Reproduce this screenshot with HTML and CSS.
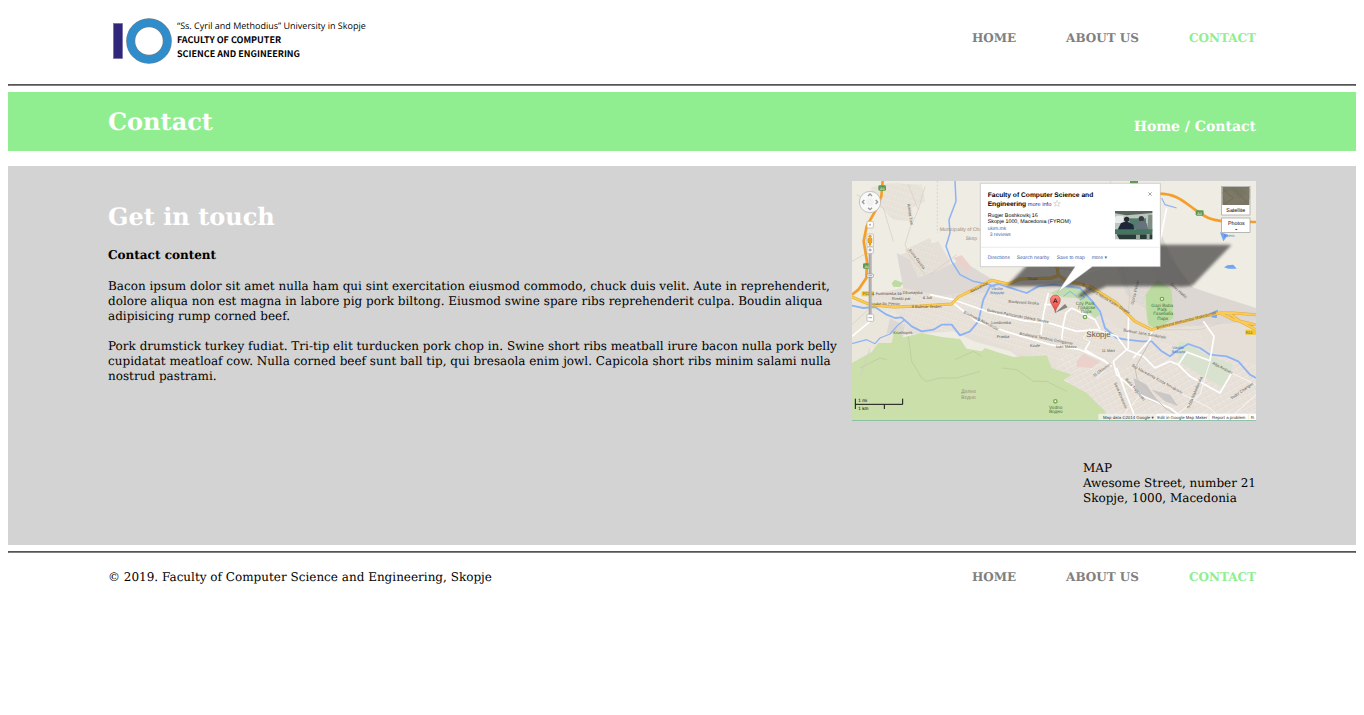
FILE: index.html
```
<!DOCTYPE html>
<html lang="en">
<head>
<meta charset="utf-8">
<title>Contact</title>
<link rel="stylesheet" href="styles.css">
</head>
<body>
<header class="bar header">
  <a class="logo" href="#" aria-label="Faculty of Computer Science and Engineering">
    <svg class="logo-mark" viewBox="0 0 64 50" aria-hidden="true">
      <rect x="5.500" y="7.500" width="9" height="35" fill="#30267a" stroke="#6c659f" stroke-width=".6"/>
      <circle cx="41" cy="25" r="18.300" fill="none" stroke="#71808c" stroke-width="9"/>
      <circle cx="41" cy="25" r="18.300" fill="none" stroke="#2f8dcc" stroke-width="7.800"/>
    </svg>
    <span class="logo-text">
      <span class="logo-small">“Ss. Cyril and Methodius” University in Skopje</span>
      <span class="logo-bold">FACULTY OF COMPUTER</span>
      <span class="logo-bold">SCIENCE AND ENGINEERING</span>
    </span>
  </a>
  <nav class="nav"><a href="#">HOME</a><a href="#">ABOUT US</a><a class="active" href="#">CONTACT</a></nav>
</header>
<hr class="rule">
<section class="bar banner">
  <h1 class="title">Contact</h1>
  <p class="crumbs">Home / Contact</p>
</section>
<main class="bar main">
  <article class="copy">
    <h2 class="title">Get in touch</h2>
    <h3 class="subtitle">Contact content</h3>
    <p>Bacon ipsum dolor sit amet nulla ham qui sint exercitation eiusmod commodo, chuck duis velit. Aute in reprehenderit, dolore aliqua non est magna in labore pig pork biltong. Eiusmod swine spare ribs reprehenderit culpa. Boudin aliqua adipisicing rump corned beef.</p>
    <p>Pork drumstick turkey fudiat. Tri-tip elit turducken pork chop in. Swine short ribs meatball irure bacon nulla pork belly cupidatat meatloaf cow. Nulla corned beef sunt ball tip, qui bresaola enim jowl. Capicola short ribs minim salami nulla nostrud pastrami.</p>
  </article>
  <aside class="place">
    <svg class="map" viewBox="6 9 1212 720" role="img" aria-label="Map of Skopje">
      <defs>
        <pattern id="streets" width="19" height="17" patternUnits="userSpaceOnUse" patternTransform="rotate(17)">
          <path d="M0 4H19M6 0V17M14 4V17M0 12H14" fill="none" stroke="#f5f1e9" stroke-width="1.600"/>
          <path d="M0 5.500H19M7.500 0V17" fill="none" stroke="#d2cac1" stroke-width=".8"/>
        </pattern>
        <pattern id="streets2" width="16" height="17" patternUnits="userSpaceOnUse" patternTransform="rotate(-28)">
          <path d="M0 4H16M6 0V17M0 12H16" fill="none" stroke="#f6f2ec" stroke-width="1.600"/>
          <path d="M0 5.500H16M7.500 0V17" fill="none" stroke="#cfc7be" stroke-width=".8"/>
        </pattern>
        <filter id="soft" x="-10%" y="-20%" width="120%" height="140%"><feGaussianBlur stdDeviation="4"/></filter>
        <linearGradient id="pin" x1="0" y1="0" x2="0" y2="1"><stop offset="0" stop-color="#ff8a80"/><stop offset="1" stop-color="#e0443c"/></linearGradient>
      </defs>
      <rect x="6" y="9" width="1212" height="720" fill="#efece4"/>
      <!-- built-up areas -->
      <path d="M60 30L120 15 215 20 225 70 185 90 190 130 130 125 100 95Z" fill="#e7e1d8"/>
      <path d="M150 230L265 190 300 250 300 300 420 300 470 320 620 310 700 290 840 240 880 180 925 155 975 250 1010 320 1218 400V729H740L690 650 640 600 540 560 480 520 370 490 310 460 160 470 90 440 60 390 60 350 160 330Z" fill="#e6dfd7"/>
      <path d="M140 225L250 285 330 245 420 300 420 340 310 360 160 330Z" fill="#ddd8d3"/>
      <path d="M165 215L240 180 275 270 205 300Z" fill="#e3ddd4"/>
      <path d="M790 240L885 170 930 155 960 240 1030 330 1218 390V430L960 450 830 350Z" fill="#dcd7d2"/>
      <path d="M6 370H120L170 455 90 550 6 600Z" fill="#ebe6dc"/>
      <path d="M120 420L165 440 160 475 110 465Z" fill="#dcd7d2"/>
      <path d="M60 30L120 15 215 20 225 70 185 90 190 130 130 125 100 95ZM165 215L240 180 275 270 205 300ZM60 350L300 350 480 320 640 330 840 470 760 600 500 520 370 470 310 460 160 450 90 400ZM20 560L60 510 130 500 100 580 30 610Z" fill="url(#streets)" opacity=".75"/>
      <path d="M640 520L820 570 900 490 1080 520 1218 560V729H750L690 650 610 590Z" fill="url(#streets2)" opacity=".9"/>
      <path d="M800 280L890 230 930 320 880 400ZM870 450L1040 440 1080 530 960 540Z" fill="url(#streets)" opacity=".6"/>
      <path d="M850 600L890 620 930 680 900 668 860 640ZM905 635L960 650 985 685 945 670Z" fill="#cbc7c4"/>
      <path d="M310 240L335 232 365 268 350 280ZM680 550L700 527 750 550 725 570 680 567Z" fill="#ead1cc"/>
      <!-- green areas -->
      <path d="M6 555L65 522 85 495 125 495 135 450 160 478 215 465 275 477 330 483 350 512 395 520 405 510 450 525 490 537 520 535 555 535 590 532 605 570 665 590 640 607 710 645 765 700 775 729H6Z" fill="#cadfaa"/>
      <path d="M125 315L135 305 160 315 150 327 130 326ZM890 410L887 350 905 325 925 307 965 335 970 420 920 455 895 440Z" fill="#bcdba0"/>
      <path d="M600 345L650 323 690 330 730 370 750 410 735 420 700 390 685 360 640 358Z" fill="#c2deb0"/>
      <path d="M985 490L1020 495 1060 525 1150 560 1120 630 1050 590 985 550Z" fill="#d9e2cf"/>
      <path d="M175 475L185 550 215 600 230 610 270 600 320 600 390 580M455 570L500 575 550 610 590 610 650 640M315 545L370 520 395 535M30 570L90 540 110 545" fill="none" stroke="#b9c5a0" stroke-width="2"/>
      <!-- water -->
      <g fill="none" stroke="#8db3f4" stroke-linejoin="round">
        <path d="M315 9L318 70 297 125 300 165 288 205 305 250 330 290 370 310 410 318 435 325" stroke-width="4.500"/>
        <path d="M6 383L40 390 75 387 110 410 135 420 155 418 185 445 215 460 250 455 275 440 305 440 330 472 360 460 385 430 400 365 420 325 445 318 530 345 565 325 610 320 650 325 690 330 725 368 750 400 765 450 800 480 830 485 875 490 905 490 935 520 960 535 985 515 1015 498 1050 510 1080 530 1130 535 1165 550 1200 590 1218 600" stroke-width="5.500"/>
        <path d="M6 497L50 485 75 497 90 480 120 468 145 440 165 425M935 60L945 80 980 90" stroke-width="3.500"/>
      </g>
      <path d="M1110 163L1135 170 1120 190ZM1122 268L1132 262 1150 260 1160 272 1135 272ZM1080 405L1104 395 1100 420 1085 418Z" fill="#73a5f5"/>
      <path d="M640 355L660 340 680 355M690 350L705 358 690 366" fill="none" stroke="#83b9de" stroke-width="3"/>
      <!-- local roads -->
      <g fill="none" stroke="#d3cbc1" stroke-width="2">
        <path d="M175 20L205 95 180 150 165 200 180 235 225 290 M205 95L225 25M240 290L320 230M20 50L100 90 130 190M6 250L60 220M790 70L810 250 840 350 830 440M740 60L770 110M850 100L880 180M920 455H1050L1110 435M540 260L700 280 840 245M780 9L830 120M60 510L30 600M6 440L60 390"/>
      </g>
      <path d="M262 9V165" stroke="#cfc9c1" stroke-width="2" stroke-dasharray="6 5"/>
      <!-- white avenues -->
      <g fill="none" stroke="#fff" stroke-width="5" stroke-linejoin="round">
        <path d="M240 350L310 365 410 400 520 428 600 436 680 460 740 455 800 475M310 375L380 430 465 460 600 500 690 515 760 545 785 565M595 345L580 410 573 470M620 380L582 380M640 440L648 405 665 390 735 425 750 455M640 440L635 485M835 400V510L790 550M800 475L830 515 880 535 915 570 960 550 985 560 1020 595 1110 645 1145 585M985 560L1010 522 1080 548 1092 475 1060 430M905 460L900 485 850 540M790 550L800 590 870 650 960 690 1010 729M800 570L825 640 860 729M720 490L705 515 780 560M950 90L915 260M6 475L60 430"/>
      </g>
      <g fill="none" stroke="#f9f6f0" stroke-width="3">
        <path d="M850 560L980 640 1080 690 1120 729M1080 550L1050 650 960 729M1145 585L1218 620M1130 729L1218 650M790 550L740 600M835 690L810 729M720 450L700 480 720 490M870 650L840 690"/>
      </g>
      <path d="M900 490L855 570 862 605 945 690 1010 729" fill="none" stroke="#c7c0bb" stroke-width="3"/>
      <!-- yellow main roads -->
      <g fill="none" stroke-linejoin="round">
        <path d="M6 357L60 380 130 387 210 384 305 378 325 357 425 307 475 318 510 303 605 300 625 292 650 308 720 325 800 375 855 430 905 455 1060 415 1110 405 1150 405 1218 410M1110 405L1150 425 1218 440M1140 408L1170 430 1218 455M620 260L625 292" stroke="#dfad45" stroke-width="9"/>
        <path d="M6 357L60 380 130 387 210 384 305 378 325 357 425 307 475 318 510 303 605 300 625 292 650 308 720 325 800 375 855 430 905 455 1060 415 1110 405 1150 405 1218 410M1110 405L1150 425 1218 440M1140 408L1170 430 1218 455M620 260L625 292" stroke="#fbcb55" stroke-width="6"/>
        <path d="M98 9L94 55 78 95 50 145 41 190 51 250 49 300 25 335 6 350M925 47C980 47 1000 70 1035 95S1080 125 1120 130L1218 132" stroke="#f59f2a" stroke-width="8"/>
      </g>
      <g fill="#5d9950"><rect x="85" y="22" width="23" height="16" rx="4"/><rect x="39" y="256" width="23" height="16" rx="4"/><rect x="1037" y="97" width="24" height="16" rx="4"/><rect x="840" y="3" width="24" height="15" rx="4"/></g>
      <g class="map-shield"><text x="90" y="35">A3</text><text x="44" y="269">A3</text><text x="1042" y="110">A3</text></g>
      <path d="M35 340H72V355H35ZM1186 455H1218V470H1186Z" fill="#f5c82e"/>
      <g class="map-road">
        <text x="38" y="352">P2234</text><text x="1187" y="467">R11</text>
        <text x="77" y="352">Fushtanska bb</text><text x="158" y="348">Džumajska</text><text x="125" y="367">Rimski pat</text><text x="218" y="362">4 Juli</text>
        <text x="64" y="382">Ljube Ilic Petrov</text><text x="185" y="389">8 Bulevar Ilinden</text>
        <text transform="translate(362 345) rotate(-27)">Aleksandar</text><text x="532" y="306">Skupi</text>
        <text transform="translate(475 374) rotate(4)">Boulevard Ilinska</text>
        <text transform="translate(410 400) rotate(11)">Bulevard Partizanski Odredi Skopje</text>
        <text transform="translate(340 405) rotate(27)">Boulevard Aleksandar</text><text x="424" y="439">Londonska</text>
        <text x="440" y="481">Praska</text><text x="540" y="506">Kozle</text><text transform="translate(508 470) rotate(11)">Boulevard Teodosij Gologanov</text>
        <text x="618" y="511">Ivan Mazov</text><text transform="translate(695 323) rotate(31)">Boulevard Nikola Karev Skopje</text>
        <text transform="translate(920 453) rotate(-14)">Boulevard Aleksandar Makedonski</text>
        <text transform="translate(820 460) rotate(10)">Bulevar Jane Sandanski</text><text transform="translate(845 565) rotate(29)">Bul Macedonia Kosta Novakovic</text>
        <text transform="translate(825 605) rotate(49)">Boris Trajkovski</text><text transform="translate(792 615) rotate(67)">Sava Kovacevic</text><text transform="translate(1018 692) rotate(-67)">Srbija Makedonska</text><text transform="translate(1086 558) rotate(27)">Alija Avdovic</text>
        <text transform="translate(1145 665) rotate(-35)">Todor Changov</text><text transform="translate(175 215) rotate(53)">Juzna Gazela</text><text transform="translate(172 78) rotate(82)">Aminta Treti</text><text transform="translate(960 320) rotate(42)">Dimo Hadzi</text>
        <text transform="translate(732 597) rotate(-35)">11 Oktomvri</text><text transform="translate(850 380) rotate(-76)">Gjorce Petrov</text>
        <text x="755" y="523">11 Mart</text><text x="130" y="467">Krushopek</text>
      </g>
      <g class="map-area"><text x="269" y="160">Municipality of Cha</text><text x="347" y="186">Skop</text><text x="334" y="646">Долно</text><text x="334" y="662">Водно</text></g>
      <g class="map-park"><text x="677" y="381">City Park</text><text x="684" y="394">Градски</text><text x="693" y="406">Парк</text><text x="904" y="386">Gazi Baba</text><text x="922" y="399">Park</text><text x="910" y="412">Газибаба</text><text x="922" y="425">Парк</text><text x="597" y="692">Vodno</text><text x="597" y="706">Водно</text></g>
      <g class="map-water"><text x="424" y="336">Vardar</text><text x="421" y="348">Вардар</text><text x="967" y="512">Vardar</text><text x="965" y="524">Вардар</text><text x="1122" y="178">Ezero</text></g>
      <text class="map-city" x="709" y="478">Skopje</text>
      <g fill="#fff" stroke="#75a94f" stroke-width="4"><circle cx="705" cy="417" r="5"/><circle cx="936" cy="363" r="5"/><circle cx="616" cy="670" r="5"/></g>
      <!-- callout -->
      <path d="M470 325L590 200H1145L1028 322Q1010 328 970 325H770L695 358H680L715 325Z" fill="#252525" opacity=".62" filter="url(#soft)"/>
      <path d="M615 405L645 378 653 388Z" fill="#444" opacity=".6"/>
      <path d="M391 16H931V266H727L622 344 675 266H391Z" fill="#fff" stroke="#a7a7a7" stroke-width="1.500"/>
      <path d="M394 208H928" stroke="#e3e3e3" stroke-width="2"/>
      <g class="pop-title"><text x="413" y="56">Faculty of Computer Science and</text><text x="413" y="83">Engineering</text></g>
      <text class="pop-more" x="533" y="83">more info</text>
      <path d="M621 67L624 74H631L625 78 628 85 621 81 614 85 617 78 611 74H618Z" fill="none" stroke="#bbb" stroke-width="1.500"/>
      <g class="pop-text"><text x="413" y="116">Rugjer Boshkovikj 16</text><text x="413" y="136">Skopje 1000, Macedonia (FYROM)</text></g>
      <g class="pop-link"><text x="413" y="155">ukim.mk</text><text x="419" y="175">3 reviews</text><text x="413" y="242">Directions</text><text x="500" y="242">Search nearby</text><text x="620" y="242">Save to map</text><text x="725" y="242">more ▾</text></g>
      <path d="M895 43L905 53M905 43L895 53" stroke="#777" stroke-width="2"/>
      <g>
        <path d="M795 99H907V184H795Z" fill="#bcc6c0"/><path d="M795 99H907V105L830 112 795 106Z" fill="#59645b"/>
        <path d="M800 113H820V135H795V118Z" fill="#e5ece9"/><path d="M838 121H888V153H838Z" fill="#547c6c"/><path d="M895 110H907V160H892Z" fill="#7f8d83"/>
        <circle cx="830" cy="124" r="8" fill="#29282b"/><path d="M804 153L813 135 830 130 850 140 853 158H804Z" fill="#1e2638"/>
        <circle cx="874" cy="122" r="8" fill="#393b40"/><path d="M858 157L861 137 875 128 890 136 895 157Z" fill="#66727e"/>
        <path d="M795 154H907V168H795Z" fill="#437661"/><path d="M800 169H907V184H808Z" fill="#293b36"/><path d="M858 170H870V184H858ZM890 168H899V184H890Z" fill="#9aa69d"/>
      </g>
      <path d="M616 404C615 388 601 380 601 366A15 15 0 0 1 631 366C631 380 617 388 616 404Z" fill="url(#pin)" stroke="#a33a35" stroke-width="1.500"/>
      <text class="pin-letter" x="609" y="374">A</text>
      <!-- controls -->
      <circle cx="60" cy="72" r="32" fill="#f9f9f9" stroke="#aaa" stroke-width="2"/><circle cx="60" cy="72" r="11" fill="#f1f1f1"/>
      <path d="M54 54L60 48 66 54M54 89L60 95 66 89M43 66L37 72 43 78M77 66L83 72 77 78" fill="none" stroke="#999" stroke-width="4"/>
      <g fill="#fff" stroke="#aaa" stroke-width="2">
        <rect x="51" y="130" width="19" height="20" rx="3"/><rect x="57" y="225" width="7" height="188"/><rect x="51" y="168" width="19" height="38" rx="2"/><rect x="51" y="207" width="19" height="19" rx="2"/><rect x="51" y="409" width="20" height="21" rx="3"/>
      </g>
      <path d="M60 228V408" stroke="#666" stroke-width="3"/>
      <rect x="51" y="288" width="19" height="10" rx="2" fill="#fff" stroke="#888" stroke-width="2"/>
      <path d="M55 216H66M60 211V221M55 419H66M55 293H66" stroke="#777" stroke-width="2"/>
      <circle cx="60" cy="140" r="3" fill="#aaa"/><circle cx="60" cy="175" r="5" fill="#f0a020"/><path d="M54 181H66V194H63V202H57V194H54Z" fill="#f3a51c" stroke="#a66c0b"/>
      <rect x="1115" y="25" width="85" height="86" fill="#fff" stroke="#999" stroke-width="2"/><rect x="1117" y="27" width="81" height="54" fill="#777563"/>
      <path d="M1117 43L1145 38 1170 61 1198 39V63L1160 81H1130ZM1170 27L1198 31V52Z" fill="#7d7966"/><path d="M1120 35L1150 60 1125 78M1150 30L1190 72" fill="none" stroke="#6e6e5e" stroke-width="3"/>
      <rect x="1115" y="120" width="85" height="43" fill="#fff" stroke="#999" stroke-width="2"/>
      <g class="map-button"><text x="1129" y="101">Satellite</text><text x="1134" y="140">Photos</text></g><path d="M1154 153H1163L1159 157Z" fill="#444"/>
      <path d="M16 662V693M16 679H158V662M103 680V693" fill="none" stroke="#111" stroke-width="3"/>
      <g class="map-scale"><text x="25" y="671">1 mi</text><text x="25" y="695">1 km</text></g>
      <path d="M745 707H1218V727H745Z" fill="#f4f3ef" opacity=".8"/><path d="M919 707H1075V727H919ZM1080 707H1193V727H1080ZM1198 707H1218V727H1198Z" fill="#fff"/>
      <g class="map-credit"><text x="759" y="722">Map data ©2014 Google ▾</text><text x="922" y="722">Edit in Google Map Maker</text><text x="1086" y="722">Report a problem</text><text x="1202" y="722">R.</text></g>
      <path d="M6 728H1218" stroke="#80b9a3" stroke-width="3"/>
    </svg>
    <address class="address">MAP<br>Awesome Street, number 21<br>Skopje, 1000, Macedonia</address>
  </aside>
</main>
<hr class="rule">
<footer class="bar footer">
  <p class="copyright">© 2019. Faculty of Computer Science and Engineering, Skopje</p>
  <nav class="nav"><a href="#">HOME</a><a href="#">ABOUT US</a><a class="active" href="#">CONTACT</a></nav>
</footer>
</body>
</html>
```
FILE: styles.css
```
body {
  margin: 8px;
  background: #fff;
  color: #000;
  font-family: "DejaVu Serif", serif;
  font-size: 12px;
  line-height: 15px;
  text-rendering: geometricPrecision;
}

h1, h2, h3, p { margin: 0; }

.bar {
  display: flex;
  justify-content: space-between;
  padding: 0 100px;
}

.header { padding-bottom: 12px; }

.logo {
  display: flex;
  color: #000;
  text-decoration: none;
  padding-top: 8px;
}
.logo-mark { width: 64px; height: 50px; }
.logo-text {
  display: flex;
  flex-direction: column;
  padding: 3px 0 0 5px;
  line-height: 14px;
  font-size: 9px;
  white-space: nowrap;
}
.logo-small { font-family: "Open Sans", sans-serif; }
.logo-bold {
  font-family: "Noto Sans CJK SC", "Open Sans", sans-serif;
  font-weight: bold;
}

.nav {
  display: flex;
  gap: 50px;
  font-weight: bold;
}
.header .nav { padding-top: 23px; }
.nav a { color: gray; text-decoration: none; }
.nav .active { color: lightgreen; }

.rule {
  margin: 6px 0;
  border: 1px solid #555;
  border-bottom-color: gray;
}

.banner {
  background: lightgreen;
  color: #fff;
  padding-top: 16px;
  padding-bottom: 15px;
  margin-bottom: 15px;
}
.title {
  font-size: 24px;
  line-height: 28px;
  color: #fff;
}
.crumbs {
  font-size: 14px;
  font-weight: bold;
  line-height: 16px;
  padding-top: 11px;
}

.main {
  background: lightgray;
  padding-top: 15px;
  padding-bottom: 39px;
}
.copy { flex: 1; padding-top: 22px; }
.subtitle { font-size: 12px; margin-top: 17px; }
.copy p { margin-top: 15px; }
.subtitle + p { margin-top: 16px; }

.place {
  display: flex;
  flex-direction: column;
  align-items: flex-end;
  gap: 40px;
}
.map { display: block; width: 404px; height: 240px; }
.address { font-style: normal; }

.footer { padding-top: 11px; }

.map text { font-family: "Liberation Sans", sans-serif; }
.map-road text { font-size: 12px; fill: #5d574d; }
.map-shield text { font-size: 11px; fill: #fff; }
.map-area text { font-size: 15px; fill: #998b78; }
.map-park text { font-size: 14px; fill: #39733a; }
.map-water text { font-size: 12px; fill: #4779bd; }
.map .map-city { font-size: 24px; fill: #665a45; }
.map .pop-title text { font-size: 20px; font-weight: bold; }
.map .pop-more { font-size: 17px; fill: #2929a3; }
.pop-text text { font-size: 16px; }
.pop-link text { font-size: 15px; fill: #3f5fae; }
.map .pin-letter { font-size: 20px; }
.map-button text { font-size: 16px; }
.map-scale text { font-size: 14px; }
.map-credit text { font-size: 13px; fill: #333; }
```
